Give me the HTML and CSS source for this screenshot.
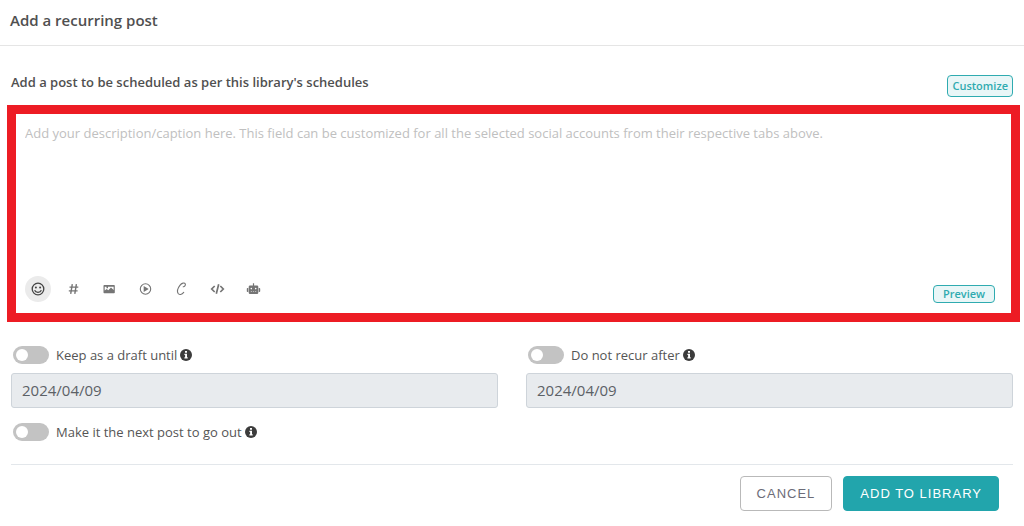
FILE: index.html
```html
<!DOCTYPE html>
<html lang="en">
<head>
    <meta charset="UTF-8">
    <meta name="viewport" content="width=device-width, initial-scale=1.0">
    <title>Add a recurring post</title>
    <link rel="stylesheet" href="styles.css">
</head>
<body>
    <header class="modal-header">
        <h1>Add a recurring post</h1>
    </header>

    <form class="modal-body">
        <div class="composer-head">
            <label for="caption">Add a post to be scheduled as per this library's schedules</label>
            <button type="button" class="btn-outline">Customize</button>
        </div>

        <div class="composer">
            <textarea id="caption" placeholder="Add your description/caption here. This field can be customized for all the selected social accounts from their respective tabs above."></textarea>
            <div class="composer-footer">
                <div class="toolbar">
                    <button type="button" class="tool active" aria-label="Emoji">
                        <svg viewBox="0 0 14 14" fill="none" stroke="currentColor">
                            <circle cx="7" cy="7" r="5.8" stroke-width="1.3"/>
                            <circle cx="4.9" cy="5.4" r="1" fill="currentColor" stroke="none"/>
                            <circle cx="9.1" cy="5.4" r="1" fill="currentColor" stroke="none"/>
                            <path d="M3.6 8.2c1.2 2.8 5.6 2.8 6.8 0" stroke-width="1.3"/>
                        </svg>
                    </button>
                    <button type="button" class="tool" aria-label="Hashtag">
                        <svg viewBox="0 0 14 14" fill="none" stroke="currentColor" stroke-width="1.4">
                            <path d="M5.3 2.2l-1.6 9.6M9.4 2.2l-1.6 9.6M2.5 5.1h8.8M1.8 8.9h8.8"/>
                        </svg>
                    </button>
                    <button type="button" class="tool" aria-label="Image">
                        <svg viewBox="0 0 14 14" fill="currentColor">
                            <path fill-rule="evenodd" d="M1.300 3h9.700a.8.8 0 0 1 .8.8v6.600a.8.8 0 0 1-.8.8H1.300a.8.8 0 0 1-.8-.8V3.800A.8.8 0 0 1 1.300 3zM1.700 4.800v3.700l2-1.500 1.600 1.200 2.700-2.700 2.600 2.500V4.800H5v1.400H3.500V4.800z"/>
                        </svg>
                    </button>
                    <button type="button" class="tool" aria-label="Video">
                        <svg viewBox="0 0 14 14" fill="none" stroke="currentColor" stroke-width="1.1">
                            <circle cx="6.500" cy="7" r="5.200"/>
                            <path d="M4.700 4v6L9.700 7z" fill="currentColor" stroke="none"/>
                        </svg>
                    </button>
                    <button type="button" class="tool" aria-label="Canva">
                        <svg viewBox="0 0 14 14" fill="none" stroke="currentColor" stroke-linecap="round">
                            <path d="M8.200 4.800c1.200.2 2.600-1.500 2.100-2.800C9.600.4 6.700.9 4.900 3.300 3 5.800 2 9.300 3 11.300c1.200 2.100 4 1.200 5.700-.9" stroke-width="1.100"/>
                        </svg>
                    </button>
                    <button type="button" class="tool" aria-label="Code">
                        <svg viewBox="0 0 14 14" fill="none" stroke="currentColor" stroke-width="1.700">
                            <path d="M3.700 4L.7 7l3 3M9.300 4L12.300 7l-3 3M7.700 2.200L5.300 11.800"/>
                        </svg>
                    </button>
                    <button type="button" class="tool" aria-label="Assistant">
                        <svg viewBox="0 0 14 14" fill="currentColor">
                            <path fill-rule="evenodd" d="M5.900 1.200h1.200v2.300h2.900a1.300 1.300 0 0 1 1.300 1.300v6a1.300 1.300 0 0 1-1.300 1.300H3a1.300 1.300 0 0 1-1.300-1.300v-6A1.300 1.300 0 0 1 3 3.500h2.900zM4.300 5.800a.8.8 0 1 0 0 1.600.8.8 0 0 0 0-1.600zM8.700 5.800a.8.8 0 1 0 0 1.600.8.8 0 0 0 0-1.600zM3.800 9.400v.6H5v-.6zM5.900 9.400v.6h1.200v-.6zM8 9.400v.6h1.200v-.6z"/>
                            <path d="M1.300 6H.6a.8.8 0 0 0-.8.8v2.400a.8.8 0 0 0 .8.8h.7zM11.700 6h.7a.8.8 0 0 1 .8.8v2.400a.8.8 0 0 1-.8.8h-.7z"/>
                        </svg>
                    </button>
                </div>
                <button type="button" class="btn-outline btn-preview">Preview</button>
            </div>
        </div>

        <div class="options">
            <div class="option">
                <div class="switch-row">
                    <input type="checkbox" class="switch" id="draft">
                    <label for="draft">Keep as a draft until</label>
                    <svg class="info" viewBox="0 0 12 12">
                        <circle cx="6" cy="6" r="6" fill="#3c3c3c"/>
                        <path fill="#fff" d="M5 2h2v1.800H5zM4.400 4.800H7v3.400h.7v1.200H4.400V8.200h.7V6h-.7z"/>
                    </svg>
                </div>
                <input type="text" class="date" value="2024/04/09" aria-label="Draft until date" disabled>
            </div>
            <div class="option">
                <div class="switch-row">
                    <input type="checkbox" class="switch" id="recur">
                    <label for="recur">Do not recur after</label>
                    <svg class="info" viewBox="0 0 12 12">
                        <circle cx="6" cy="6" r="6" fill="#3c3c3c"/>
                        <path fill="#fff" d="M5 2h2v1.800H5zM4.400 4.800H7v3.400h.7v1.200H4.400V8.200h.7V6h-.7z"/>
                    </svg>
                </div>
                <input type="text" class="date" value="2024/04/09" aria-label="Recur end date" disabled>
            </div>
            <div class="option">
                <div class="switch-row">
                    <input type="checkbox" class="switch" id="next">
                    <label for="next">Make it the next post to go out</label>
                    <svg class="info" viewBox="0 0 12 12">
                        <circle cx="6" cy="6" r="6" fill="#3c3c3c"/>
                        <path fill="#fff" d="M5 2h2v1.800H5zM4.400 4.800H7v3.400h.7v1.200H4.400V8.200h.7V6h-.7z"/>
                    </svg>
                </div>
            </div>
        </div>

        <div class="modal-footer">
            <button type="button" class="btn btn-cancel">CANCEL</button>
            <button type="submit" class="btn btn-primary">ADD TO LIBRARY</button>
        </div>
    </form>
</body>
</html>
```
FILE: styles.css
```css
* {
    box-sizing: border-box;
}

body {
    margin: 0;
    font-family: "Open Sans", "Noto Sans", sans-serif;
    font-size: 13px;
    color: #555;
    background-color: #fff;
}

button,
input,
textarea {
    font-family: inherit;
    margin: 0;
}

.modal-header {
    padding: 10px 10px 15px;
    border-bottom: 1px solid #e5e5e5;
}

.modal-header h1 {
    margin: 0;
    font-size: 15px;
    line-height: 20px;
    font-weight: 600;
    color: #505050;
}

.modal-body {
    padding: 28px 11px 0;
}

.composer-head {
    display: flex;
    justify-content: space-between;
    align-items: flex-start;
    height: 31px;
}

.composer-head label {
    font-weight: 600;
    line-height: 16px;
    color: #505050;
}

.btn-outline {
    height: 22px;
    padding: 0 4px;
    border: 1px solid #2fabb0;
    border-radius: 4px;
    background-color: #e9f6f7;
    color: #2fabb0;
    font-size: 11px;
    line-height: 18px;
    font-weight: 600;
}

.composer-head .btn-outline {
    align-self: flex-end;
    margin-bottom: 8px;
}

/* Highlighted text area with its toolbar */
.composer {
    margin: 0 -7px 0 -4px;
    border: 9px solid #ed1c24;
    padding: 9px 16px 10px 9px;
}

.composer textarea {
    display: block;
    width: 100%;
    height: 153px;
    padding: 0;
    border: 0;
    outline: 0;
    resize: none;
    font-size: 13px;
    line-height: 20px;
    color: #555;
}

.composer textarea::placeholder {
    color: #c0c0c0;
}

.composer-footer {
    display: flex;
    justify-content: space-between;
    align-items: flex-end;
}

.toolbar {
    display: flex;
    gap: 10px;
    padding-bottom: 1px;
}

.tool {
    display: flex;
    align-items: center;
    justify-content: center;
    width: 26px;
    height: 26px;
    padding: 0;
    border: 0;
    border-radius: 50%;
    background: none;
    color: #757575;
}

.tool svg {
    width: 14px;
    height: 14px;
    overflow: visible;
}

.tool.active {
    background-color: #ebebeb;
    color: #444;
}

.btn-preview {
    width: 62px;
    height: 18px;
    line-height: 16px;
}

.options {
    display: grid;
    grid-template-columns: 1fr 1fr;
    column-gap: 28px;
    row-gap: 14px;
    padding-top: 23px;
}

.switch-row {
    display: flex;
    align-items: center;
    height: 20px;
    padding-left: 2px;
}

.switch-row label {
    margin-left: 7px;
}

.switch {
    appearance: none;
    width: 36px;
    height: 18px;
    padding: 3px;
    border-radius: 9px;
    background-color: #c3c3c3;
}

.switch::before {
    content: "";
    display: block;
    width: 12px;
    height: 12px;
    border-radius: 50%;
    background-color: #fff;
}

.switch:checked {
    background-color: #22a5ac;
}

.switch:checked::before {
    margin-left: auto;
}

.info {
    width: 12px;
    height: 12px;
    margin-left: 3px;
}

.date {
    display: block;
    width: 100%;
    height: 35px;
    margin-top: 8px;
    padding: 0 10px 1px;
    border: 1px solid #ced4da;
    border-radius: 3px;
    background-color: #e8ebee;
    color: #5c6166;
    font-size: 15px;
}

.modal-footer {
    display: flex;
    justify-content: flex-end;
    gap: 11px;
    margin-top: 22px;
    padding: 11px 14px 14px;
    border-top: 1px solid #e3e7eb;
}

.btn {
    height: 35px;
    padding: 0 16px;
    border: 1px solid #b9b9b9;
    border-radius: 4px;
    background-color: #fff;
    color: #6c6c78;
    font-family: "Liberation Sans", Arial, sans-serif;
    font-size: 13px;
    letter-spacing: 1px;
}

.btn-primary {
    border-color: #22a5ac;
    background-color: #22a5ac;
    color: #fff;
}
```
